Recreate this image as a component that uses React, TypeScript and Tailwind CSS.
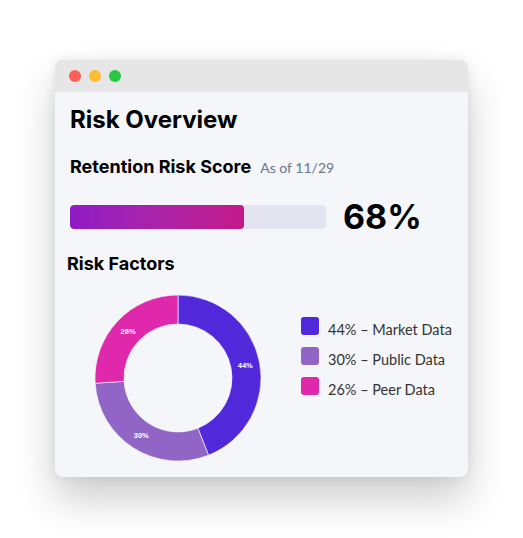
import React from "react";

const R = 83;
const r = 54;
const C = 83;

function arcPath(start: number, end: number) {
  const a0 = start * 2 * Math.PI;
  const a1 = end * 2 * Math.PI;
  const p = (rad: number, a: number) => [C + rad * Math.sin(a), C - rad * Math.cos(a)];
  const [x0, y0] = p(R, a0);
  const [x1, y1] = p(R, a1);
  const [x2, y2] = p(r, a1);
  const [x3, y3] = p(r, a0);
  const large = end - start > 0.5 ? 1 : 0;
  return `M ${x0} ${y0} A ${R} ${R} 0 ${large} 1 ${x1} ${y1} L ${x2} ${y2} A ${r} ${r} 0 ${large} 0 ${x3} ${y3} Z`;
}

const segments = [
  { v: 0.44, color: "#5229da", label: "44%", name: "Market Data" },
  { v: 0.3, color: "#9165c6", label: "30%", name: "Public Data" },
  { v: 0.26, color: "#e028ad", label: "26%", name: "Peer Data" },
];

function Donut() {
  let acc = 0;
  const mid = (R + r) / 2;
  return (
    <svg width="166" height="166" viewBox="0 0 166 166">
      {segments.map((s) => {
        const start = acc;
        const end = acc + s.v;
        acc = end;
        const m = ((start + end) / 2) * 2 * Math.PI;
        const lx = C + mid * Math.sin(m);
        const ly = C - mid * Math.cos(m);
        return (
          <g key={s.label}>
            <path d={arcPath(start, end)} fill={s.color} stroke="#ffffff" strokeWidth="0.6" />
            <text
              x={lx}
              y={ly}
              fill="#ffffff"
              fontSize="7.5"
              fontWeight="700"
              textAnchor="middle"
              dominantBaseline="central"
              fontFamily="'Liberation Sans', Arial, sans-serif"
            >
              {s.label}
            </text>
          </g>
        );
      })}
    </svg>
  );
}

export default function App() {
  return (
    <div className="min-h-[538px] w-[523px] bg-white pl-[55px] pt-[60px]" style={{ fontFamily: "Inter, sans-serif" }}>
      <div className="w-[413px] h-[417px] rounded-lg overflow-hidden bg-[#f5f6fa] shadow-[0_22px_40px_rgba(0,0,0,0.2),0_0_12px_rgba(0,0,0,0.07)] flex flex-col">
        <div className="h-[32px] bg-[#e6e6e6] flex items-center pl-[14px] gap-[8px] shrink-0">
          <span className="w-[12px] h-[12px] rounded-full bg-[#ff5f57]" />
          <span className="w-[12px] h-[12px] rounded-full bg-[#febc2e]" />
          <span className="w-[12px] h-[12px] rounded-full bg-[#28c840]" />
        </div>
        <div className="flex flex-col pl-[15px] pt-[12px]">
          <h1 className="text-[24px] leading-[32px] font-bold text-black">Risk Overview</h1>
          <div className="mt-[17px] flex items-baseline gap-[9px]">
            <h2 className="text-[18px] leading-[28px] font-bold text-black">Retention Risk Score</h2>
            <span className="text-[14px] text-[#68778d]" style={{ fontFamily: "Lato, sans-serif" }}>
              As of 11/29
            </span>
          </div>
          <div className="mt-[16px] h-[40px] flex items-center gap-[17px]">
            <div className="w-[256px] h-[24px] rounded-[4px] bg-[#e5e4f1] overflow-hidden">
              <div className="h-full w-[68%] rounded-[4px] bg-gradient-to-r from-[#9019c6] to-[#c5178a]" />
            </div>
            <span className="text-[34px] leading-[40px] font-bold text-black">68%</span>
          </div>
          <h2 className="mt-[13px] -ml-[3px] text-[18px] leading-[28px] font-bold text-black">Risk Factors</h2>
          <div className="mt-[17px] flex items-start">
            <div className="ml-[25px]">
              <Donut />
            </div>
            <div className="ml-[40px] mt-[16px] flex flex-col" style={{ fontFamily: "Lato, sans-serif" }}>
              {segments.map((s) => (
                <div key={s.name} className="h-[30px] flex items-center gap-[9px]">
                  <span className="w-[18px] h-[18px] rounded-[3px]" style={{ background: s.color }} />
                  <span className="pt-[8px] text-[14.5px] leading-[20px] text-[#333333]">
                    {s.label} – {s.name}
                  </span>
                </div>
              ))}
            </div>
          </div>
        </div>
      </div>
    </div>
  );
}
